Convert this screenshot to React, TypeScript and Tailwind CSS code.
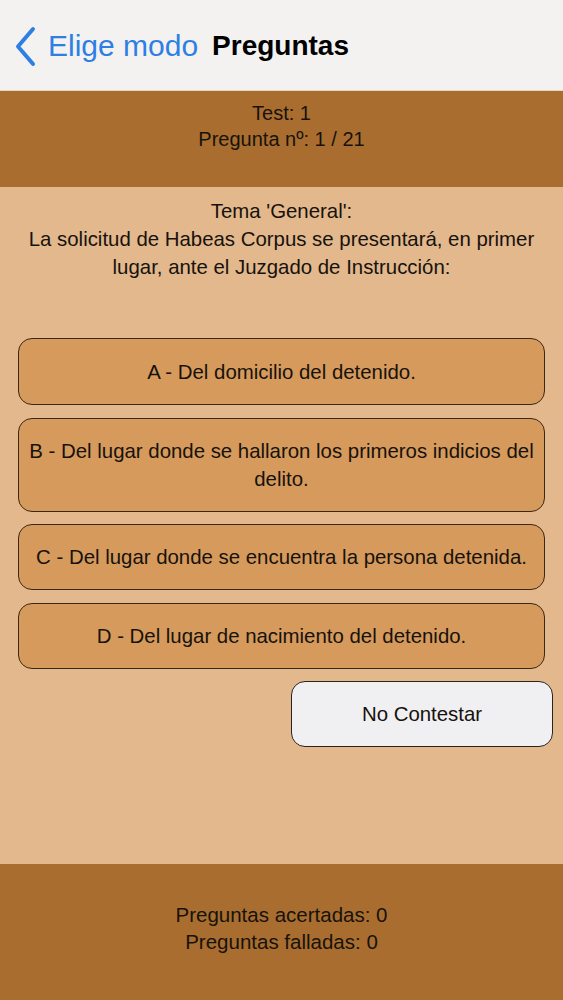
import React from "react";

const options = [
  { text: "A - Del domicilio del detenido.", h: "h-[67px]" },
  { text: "B - Del lugar donde se hallaron los primeros indicios del delito.", h: "h-[94px]" },
  { text: "C - Del lugar donde se encuentra la persona detenida.", h: "h-[66px]" },
  { text: "D - Del lugar de nacimiento del detenido.", h: "h-[66px]" },
];

export default function App() {
  return (
    <div
      className="w-[563px] h-[1000px] flex flex-col bg-[#e2b88c] text-[#17120c] overflow-hidden"
      style={{ fontFamily: '"Liberation Sans", Arial, sans-serif' }}
    >
      <header className="h-[91px] shrink-0 bg-[#f4f2f1] flex items-center pt-[2px] pl-[14px] border-b border-[#e8d5c0]">
        <svg width="22" height="41" viewBox="0 0 22 41" className="shrink-0">
          <path d="M19 3 L4 20.5 L19 38" fill="none" stroke="#2d7fe3" strokeWidth="4" strokeLinecap="round" strokeLinejoin="round" />
        </svg>
        <span className="ml-[12px] text-[30px] text-[#2d7fe3] leading-none">Elige modo</span>
        <span className="ml-[14px] text-[28px] font-bold text-black leading-none">Preguntas</span>
      </header>

      <section className="h-[96px] shrink-0 bg-[#a96e2f] pt-[9px] text-center text-[20px] leading-[26px]">
        <div>Test: 1</div>
        <div>Pregunta nº: 1 / 21</div>
      </section>

      <main className="flex-1 flex flex-col">
        <div className="pt-[10px] px-[20px] text-center text-[20.4px] leading-[28px]">
          <div>Tema 'General':</div>
          <div>La solicitud de Habeas Corpus se presentará, en primer lugar, ante el Juzgado de Instrucción:</div>
        </div>

        <div className="mt-[57px] flex flex-col gap-[12.5px] px-[18px]">
          {options.map((o) => (
            <button
              key={o.text}
              className={`${o.h} w-[527px] rounded-[14px] border-[1.5px] border-[#3a2817] bg-[#d69a5c] px-[6px] text-center text-[20.4px] leading-[28px] text-[#17120c]`}
            >
              {o.text}
            </button>
          ))}
          <div className="flex justify-end -mr-[8px]">
            <button className="h-[66px] w-[262px] rounded-[14px] border-[1.5px] border-[#2a2420] bg-[#f0eff2] text-[20.4px] text-[#17120c]">
              No Contestar
            </button>
          </div>
        </div>
      </main>

      <footer className="h-[136px] shrink-0 bg-[#a96e2f] pt-[37px] text-center text-[20.5px] leading-[27px]">
        <div>Preguntas acertadas: 0</div>
        <div>Preguntas falladas: 0</div>
      </footer>
    </div>
  );
}
